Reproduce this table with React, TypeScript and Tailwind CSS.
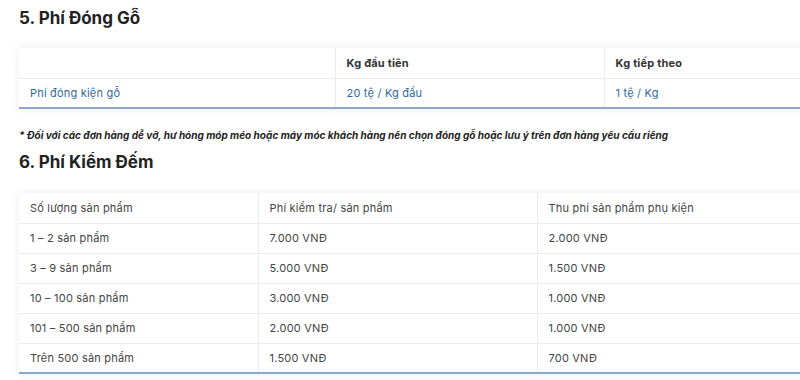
const font = { fontFamily: "Inter, 'Noto Sans', sans-serif" };

const packingRows = [["Phí đóng kiện gỗ", "20 tệ / Kg đầu", "1 tệ / Kg"]];

const countRows = [
  ["1 – 2 sản phẩm", "7.000 VNĐ", "2.000 VNĐ"],
  ["3 – 9 sản phẩm", "5.000 VNĐ", "1.500 VNĐ"],
  ["10 – 100 sản phẩm", "3.000 VNĐ", "1.000 VNĐ"],
  ["101 – 500 sản phẩm", "2.000 VNĐ", "1.000 VNĐ"],
  ["Trên 500 sản phẩm", "1.500 VNĐ", "700 VNĐ"],
];

function Heading({ children }: { children: React.ReactNode }) {
  return (
    <h2 className="text-[17px] font-bold leading-[22px] text-[#222]">
      {children}
    </h2>
  );
}

export default function App() {
  return (
    <div
      className="w-[800px] h-[380px] overflow-hidden bg-white pl-[19px] pt-[7px]"
      style={font}
    >
      <Heading>5. Phí Đóng Gỗ</Heading>

      <table className="mt-[19px] w-[860px] table-fixed border-collapse bg-white shadow-[0_0_10px_rgba(0,0,0,0.08)] border-b-2 border-[#8aa9cb] text-[11px] tracking-[0.2px]">
        <colgroup>
          <col className="w-[316px]" />
          <col className="w-[269px]" />
          <col />
        </colgroup>
        <thead>
          <tr className="h-[30px] border-b border-[#ececec]">
            <th className="px-[11px] text-left font-bold text-[#333]"></th>
            <th className="px-[11px] text-left font-bold text-[#333] border-l border-[#ececec]">
              Kg đầu tiên
            </th>
            <th className="px-[11px] text-left font-bold text-[#333] border-l border-[#ececec]">
              Kg tiếp theo
            </th>
          </tr>
        </thead>
        <tbody>
          {packingRows.map((r) => (
            <tr key={r[0]} className="h-[30px]">
              {r.map((c, i) => (
                <td
                  key={i}
                  className={`px-[11px] text-[#2f6aa3] ${i > 0 ? "border-l border-[#ececec]" : ""}`}
                >
                  {c}
                </td>
              ))}
            </tr>
          ))}
        </tbody>
      </table>

      <p className="mt-[19px] text-[10px] font-bold italic text-[#222] leading-[14px]">
        * Đối với các đơn hàng dễ vỡ, hư hỏng móp méo hoặc máy móc khách hàng nên chọn đóng gỗ hoặc lưu ý trên đơn hàng yêu cầu riêng
      </p>

      <div className="mt-[9px]">
        <Heading>6. Phí Kiểm Đếm</Heading>
      </div>

      <table className="mt-[20px] w-[860px] table-fixed border-collapse bg-white shadow-[0_0_10px_rgba(0,0,0,0.08)] border-b-2 border-[#8aa9cb] text-[11px] tracking-[0.2px] text-[#444]">
        <colgroup>
          <col className="w-[239px]" />
          <col className="w-[279px]" />
          <col />
        </colgroup>
        <thead>
          <tr className="h-[30px] border-b border-[#ececec]">
            <th className="px-[11px] text-left font-normal">Số lượng sản phẩm</th>
            <th className="px-[11px] text-left font-normal border-l border-[#ececec]">
              Phí kiểm tra/ sản phẩm
            </th>
            <th className="px-[11px] text-left font-normal border-l border-[#ececec]">
              Thu phí sản phẩm phụ kiện
            </th>
          </tr>
        </thead>
        <tbody>
          {countRows.map((r, ri) => (
            <tr
              key={r[0]}
              className={`h-[30px] ${ri < countRows.length - 1 ? "border-b border-[#ececec]" : ""}`}
            >
              {r.map((c, i) => (
                <td
                  key={i}
                  className={`px-[11px] ${i > 0 ? "border-l border-[#ececec]" : ""}`}
                >
                  {c}
                </td>
              ))}
            </tr>
          ))}
        </tbody>
      </table>
    </div>
  );
}
